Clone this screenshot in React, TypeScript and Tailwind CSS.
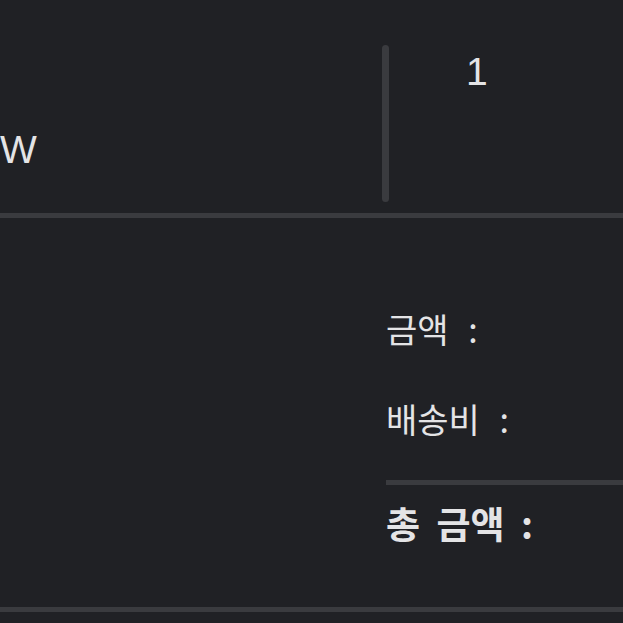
export default function App() {
  return (
    <div className="w-[623px] h-[623px] overflow-hidden bg-[#202125] text-[#e4e4e6] font-['Liberation_Sans','Noto_Sans_CJK_KR',sans-serif]">
      {/* item row */}
      <div className="flex h-[213px]">
        <div className="w-[382px] pt-[130px] text-[39px] leading-none">W</div>
        <div className="mt-[45px] h-[157px] w-[7px] rounded-full bg-[#3a3b3f]" />
        <div className="ml-[77px] pt-[52px] text-[39px] leading-none">1</div>
      </div>
      <div className="h-[5px] bg-[#3a3b3f]" />

      {/* summary */}
      <div className="flex flex-col pl-[386px] font-['Noto_Sans_CJK_KR',sans-serif] text-[34px] leading-none">
        <div className="mt-[94px] [word-spacing:12px]">금액 :</div>
        <div className="mt-[56px] [word-spacing:12px]">배송비 :</div>
        <div className="mt-[44px] h-[5px] bg-[#3a3b3f]" />
        <div className="mt-[20px] text-[37px] font-bold [word-spacing:8px]">총 금액 :</div>
      </div>
      <div className="mt-[65px] h-[5px] bg-[#3a3b3f]" />
    </div>
  );
}
